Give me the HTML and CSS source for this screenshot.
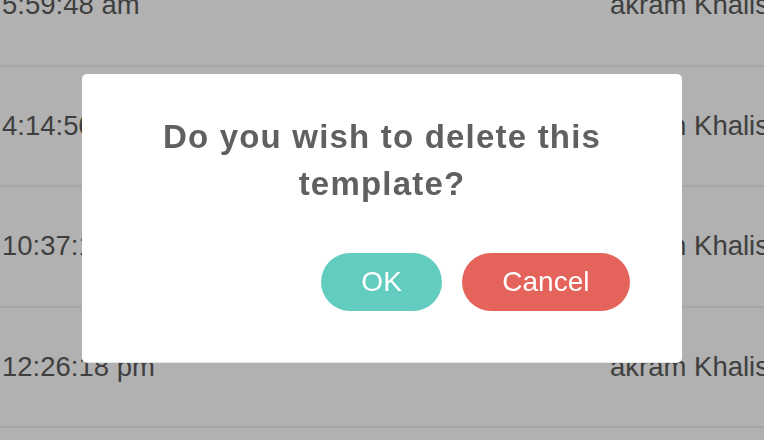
FILE: index.html
```html
<!DOCTYPE html>
<html lang="en">
<head>
<meta charset="utf-8">
<title>Delete template</title>
<link rel="stylesheet" href="styles.css">
</head>
<body>
<div class="table">
  <div class="row"><div class="cell-time">5:59:48 am</div><div class="cell-name">akram Khalis</div></div>
  <div class="row"><div class="cell-time">4:14:50 pm</div><div class="cell-name">akram Khalis</div></div>
  <div class="row"><div class="cell-time">10:37:12 am</div><div class="cell-name">akram Khalis</div></div>
  <div class="row"><div class="cell-time">12:26:18 pm</div><div class="cell-name">akram Khalis</div></div>
</div>
<div class="overlay">
  <div class="modal">
    <h2 class="title">Do you wish to delete this template?</h2>
    <div class="actions">
      <button class="btn btn-ok">OK</button>
      <button class="btn btn-cancel">Cancel</button>
    </div>
  </div>
</div>
</body>
</html>
```

FILE: styles.css
```css
html, body {
  margin: 0;
  padding: 0;
  width: 764px;
  height: 440px;
  overflow: hidden;
  background: #b1b1b1;
  font-family: "Liberation Sans", Arial, sans-serif;
}
.table {
  margin-top: -54px;
}
.row {
  display: flex;
  align-items: center;
  height: 118.6px;
  border-bottom: 2px solid #a7a7a7;
  font-size: 27.5px;
  color: #3f3f3f;
  white-space: nowrap;
}
.cell-time {
  width: 608px;
  padding-left: 2px;
  flex: none;
}
.cell-name {
  flex: none;
}
.overlay {
  position: fixed;
  inset: 0;
  display: flex;
  justify-content: center;
  align-items: flex-start;
  padding-top: 74px;
}
.modal {
  width: 600px;
  box-sizing: border-box;
  background: #ffffff;
  border-radius: 5px;
  box-shadow: 0 1px 0 #e1e6e5;
  padding: 40px 40px 51px;
}
.title {
  margin: 0;
  font-size: 33px;
  line-height: 46.5px;
  letter-spacing: 1.2px;
  font-weight: bold;
  color: #606060;
  text-align: center;
}
.actions {
  display: flex;
  justify-content: flex-end;
  gap: 20px;
  margin-top: 46px;
  padding-right: 12px;
}
.btn {
  height: 58px;
  padding: 0 40px;
  border: none;
  border-radius: 29px;
  font-family: "Liberation Sans", Arial, sans-serif;
  font-size: 28px;
  color: #ffffff;
  cursor: pointer;
}
.btn-ok {
  background: #62ccbe;
}
.btn-cancel {
  background: #e4645b;
  padding: 0 40.5px;
}
```
